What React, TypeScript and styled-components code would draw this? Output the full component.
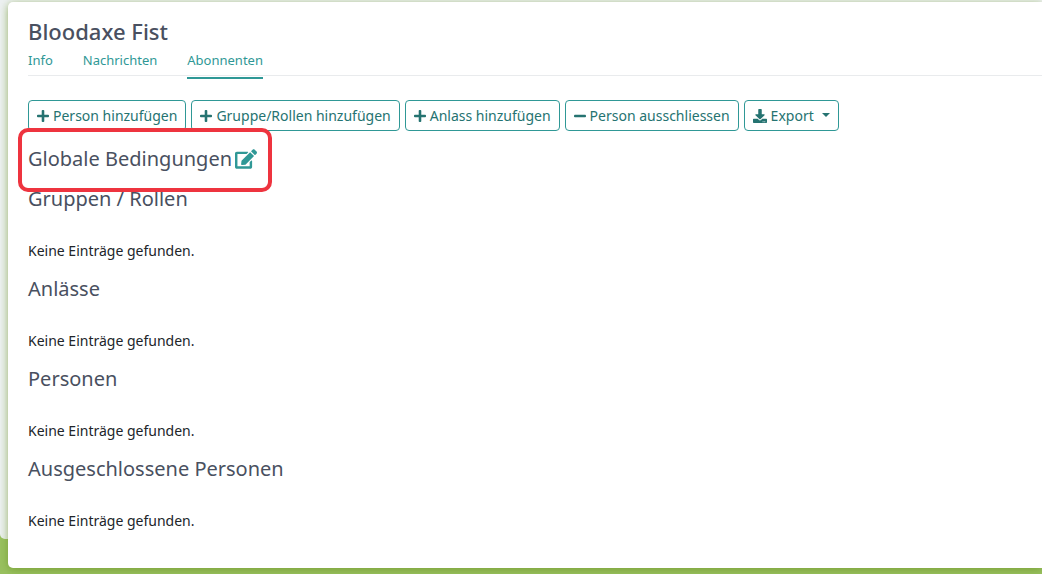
import React from "react";
import styled, { createGlobalStyle, css } from "styled-components";
import { FaPlus, FaMinus, FaDownload, FaEdit } from "react-icons/fa";

const GlobalStyle = createGlobalStyle`
  *, *::before, *::after { box-sizing: border-box; }
  html { background: #99c160; }
  body {
    margin: 0;
    font-family: "Noto Sans", sans-serif;
    font-size: 14px;
    line-height: 20px;
    color: #212529;
  }
  h1, h2, p { margin: 0; }
`;

const Page = styled.div`
  position: relative;
  min-height: 100vh;
  padding: 2px 0 6px 8px;
  overflow: hidden;
  display: flex;
  flex-direction: column;
`;

const Backdrop = styled.div`
  position: absolute;
  inset: 0 0 35px 0;
  background: #edf1f2;
  border-radius: 0 0 0 5px;
`;

const Sheet = styled.main`
  position: relative;
  flex: 1;
  padding: 15px 0 20px 20px;
  background: #fff;
  border-radius: 5px 0 0 5px;
  box-shadow: 0 2px 8px rgba(110, 150, 40, 0.7);
`;

const Title = styled.h1`
  margin-bottom: 1px;
  font-size: 22px;
  line-height: 28px;
  font-weight: 500;
  color: #495060;
`;

const Tabs = styled.nav`
  display: flex;
  gap: 30px;
  height: 30px;
  border-bottom: 1px solid #e9ebed;
`;

const Tab = styled.a<{ $active?: boolean }>`
  height: 33px;
  padding-top: 4px;
  font-size: 13px;
  line-height: 20px;
  color: #2f9896;
  text-decoration: none;
  ${(p) => p.$active && css`border-bottom: 2px solid #2f9896;`}
`;

const Toolbar = styled.div`
  display: flex;
  flex-wrap: wrap;
  gap: 5px;
  margin-top: 24px;
`;

const Button = styled.button<{ $iconWidth?: number }>`
  display: flex;
  align-items: center;
  gap: 4px;
  height: 31px;
  padding: 0 8px;
  border: 1px solid #2f9896;
  border-radius: 4px;
  background: #fff;
  color: #257371;
  font: inherit;
  white-space: nowrap;
  cursor: pointer;

  svg {
    flex: none;
    width: ${(p) => p.$iconWidth ?? 12}px;
    height: 14px;
  }
`;

const Caret = styled.span`
  margin: 0 0 2px 4px;
  border: 4px solid transparent;
  border-top-color: currentColor;
  border-bottom: 0;
`;

const Heading = styled.h2`
  font-size: 20px;
  line-height: 24px;
  font-weight: 400;
  color: #495060;
`;

const Conditions = styled.section`
  position: relative;
  display: flex;
  align-items: center;
  gap: 3px;
  width: fit-content;
  margin: 16px 0;
`;

const EditLink = styled.a`
  display: flex;
  color: #2f9896;
`;

const Marker = styled.div`
  position: absolute;
  inset: -19px -15px -21px -10px;
  border: 4px solid #ee343f;
  border-radius: 10px;
  pointer-events: none;
`;

const Group = styled.section`
  margin-bottom: 16px;
`;

const Empty = styled.p`
  padding-top: 30px;
`;

const groups = ["Gruppen / Rollen", "Anlässe", "Personen", "Ausgeschlossene Personen"];

export default function App() {
  return (
    <Page>
      <GlobalStyle />
      <Backdrop />
      <Sheet>
        <Title>Bloodaxe Fist</Title>
        <Tabs>
          <Tab href="#info">Info</Tab>
          <Tab href="#nachrichten">Nachrichten</Tab>
          <Tab href="#abonnenten" $active aria-current="page">Abonnenten</Tab>
        </Tabs>
        <Toolbar>
          <Button type="button"><FaPlus />Person hinzufügen</Button>
          <Button type="button"><FaPlus />Gruppe/Rollen hinzufügen</Button>
          <Button type="button"><FaPlus />Anlass hinzufügen</Button>
          <Button type="button"><FaMinus />Person ausschliessen</Button>
          <Button type="button" $iconWidth={14} aria-haspopup="menu"><FaDownload />Export<Caret /></Button>
        </Toolbar>
        <Conditions>
          <Heading>Globale Bedingungen</Heading>
          <EditLink href="#bedingungen" aria-label="Globale Bedingungen bearbeiten">
            <FaEdit size={22} />
          </EditLink>
          <Marker />
        </Conditions>
        {groups.map((name) => (
          <Group key={name}>
            <Heading>{name}</Heading>
            <Empty>Keine Einträge gefunden.</Empty>
          </Group>
        ))}
      </Sheet>
    </Page>
  );
}
